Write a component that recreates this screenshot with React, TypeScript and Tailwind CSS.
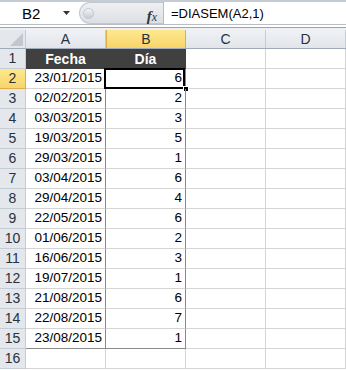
import React from "react";

const dates = [
  "23/01/2015","02/02/2015","03/03/2015","19/03/2015","29/03/2015","03/04/2015","29/04/2015",
  "22/05/2015","01/06/2015","16/06/2015","19/07/2015","21/08/2015","22/08/2015","23/08/2015",
];
const vals = [6,2,3,5,1,6,4,6,2,3,1,6,7,1];

const font = { fontFamily: '"Liberation Sans", Arial, sans-serif' };

export default function App() {
  return (
    <div className="w-[346px] h-[370px] overflow-hidden bg-white relative" style={font}>
      {/* formula bar */}
      <div className="h-[2px] bg-[#c6ccd4]" />
      <div className="flex h-[22px] bg-white">
        <div className="w-[79px] flex items-center relative">
          <span className="ml-[22px] text-[15px] text-black leading-none">B2</span>
          <svg className="absolute left-[63px] top-[9px]" width="8" height="5" viewBox="0 0 8 5">
            <path d="M0 0 H7 L3.5 4 Z" fill="#333" />
          </svg>
        </div>
        <div className="w-[84px] relative rounded-l-[11px] border border-r-0 border-[#c3c8cf] bg-gradient-to-b from-[#eef0f3] to-[#dcdfe4] flex items-center">
          <div className="ml-[3px] w-[11px] h-[11px] rounded-full bg-gradient-to-b from-[#f4f5f7] to-[#c8ccd2] border border-[#c3c7cd]" />
          <span className="absolute right-[6px] top-[2px] text-[15px] italic text-[#333]" style={{ fontFamily: '"Liberation Serif", serif' }}>
            <span className="font-bold">f</span><span className="text-[12px]">x</span>
          </span>
        </div>
        <div className="w-px bg-[#b7bcc4]" />
        <div className="flex-1 flex items-center pl-[7px]">
          <span className="text-[13px] text-black leading-none">=DIASEM(A2,1)</span>
        </div>
      </div>
      <div className="h-px bg-[#b9bec6]" />
      <div className="h-[2px] bg-white" />
      <div className="h-px bg-[#9da4ae]" />
      <div className="h-[2px] bg-[#eef0f3]" />

      {/* column headers */}
      <div className="flex h-[19px] border-b border-[#9eabbb]">
        <div className="w-[26px] bg-[#e4e7eb] border-r border-[#c6ccd3] relative">
          <svg className="absolute right-[2px] bottom-[2px]" width="13" height="13" viewBox="0 0 13 13">
            <path d="M13 0 V13 H0 Z" fill="#c3c7cd" />
          </svg>
        </div>
        <div className="w-[80px] bg-gradient-to-b from-[#f0f2f5] to-[#e1e4e9] border-r border-[#c6ccd3] flex items-center justify-center text-[14px] text-[#27323e]">A</div>
        <div className="w-[80px] bg-gradient-to-b from-[#fde98e] to-[#f8d46a] border border-[#e0ad4c] border-t-0 border-b-0 flex items-center justify-center text-[14px] text-[#27323e]">B</div>
        <div className="w-[80px] bg-gradient-to-b from-[#f0f2f5] to-[#e1e4e9] border-r border-[#c6ccd3] flex items-center justify-center text-[14px] text-[#27323e]">C</div>
        <div className="w-[80px] bg-gradient-to-b from-[#f0f2f5] to-[#e1e4e9] border-r border-[#c6ccd3] flex items-center justify-center text-[14px] text-[#27323e]">D</div>
      </div>

      {/* row 1 */}
      <div className="flex h-[20px]">
        <div className="w-[26px] bg-[#e4e7eb] border-r border-b border-[#c6ccd3] flex items-center justify-center text-[14px] text-[#27323e]">1</div>
        <div className="w-[80px] bg-[#404040] border-r border-[#404040] flex items-center justify-center text-[14px] font-bold text-white">Fecha</div>
        <div className="w-[80px] bg-[#404040] border-r border-[#404040] flex items-center justify-center text-[14px] font-bold text-white">Día</div>
        <div className="w-[80px] border-r border-b border-[#d4d4d4]" />
        <div className="w-[80px] border-r border-b border-[#d4d4d4]" />
      </div>

      {dates.map((d, i) => {
        const r = i + 2;
        const sel = r === 2;
        const last = r === 15;
        return (
          <div key={r} className="flex h-[20px]">
            <div
              className={
                sel
                  ? "w-[26px] bg-gradient-to-b from-[#fde98e] to-[#f8d46a] border-r border-b border-[#e0ad4c] flex items-center justify-center text-[14px] text-[#27323e]"
                  : "w-[26px] bg-[#e4e7eb] border-r border-b border-[#c6ccd3] flex items-center justify-center text-[14px] text-[#27323e]"
              }
            >
              {r}
            </div>
            <div
              className={
                last
                  ? "w-[80px] border-r border-b border-[#8a8a8a] flex items-center justify-end pr-[3px] text-[13.5px] text-black"
                  : "w-[80px] border-r border-b border-r-[#8a8a8a] border-b-[#d4d4d4] flex items-center justify-end pr-[3px] text-[13.5px] text-black"
              }
            >
              {d}
            </div>
            <div
              className={
                last
                  ? "w-[80px] border-r border-b border-[#8a8a8a] flex items-center justify-end pr-[3px] text-[13.5px] text-black relative"
                  : "w-[80px] border-r border-b border-r-[#8a8a8a] border-b-[#d4d4d4] flex items-center justify-end pr-[3px] text-[13.5px] text-black relative"
              }
            >
              {vals[i]}
              {sel && (
                <>
                  <div className="absolute left-[-2px] top-[-1px] w-[81px] h-[21px] border-2 border-black pointer-events-none" />
                  <div className="absolute right-[-4px] bottom-[-4px] w-[6px] h-[6px] bg-black border border-white" />
                </>
              )}
            </div>
            <div className="w-[80px] border-r border-b border-[#d4d4d4]" />
            <div className="w-[80px] border-r border-b border-[#d4d4d4]" />
          </div>
        );
      })}

      <div className="flex h-[20px]">
        <div className="w-[26px] bg-[#e4e7eb] border-r border-b border-[#c6ccd3] flex items-center justify-center text-[14px] text-[#27323e]">16</div>
        <div className="w-[80px] border-r border-b border-[#d4d4d4]" />
        <div className="w-[80px] border-r border-b border-[#d4d4d4]" />
        <div className="w-[80px] border-r border-b border-[#d4d4d4]" />
        <div className="w-[80px] border-r border-b border-[#d4d4d4]" />
      </div>
    </div>
  );
}
